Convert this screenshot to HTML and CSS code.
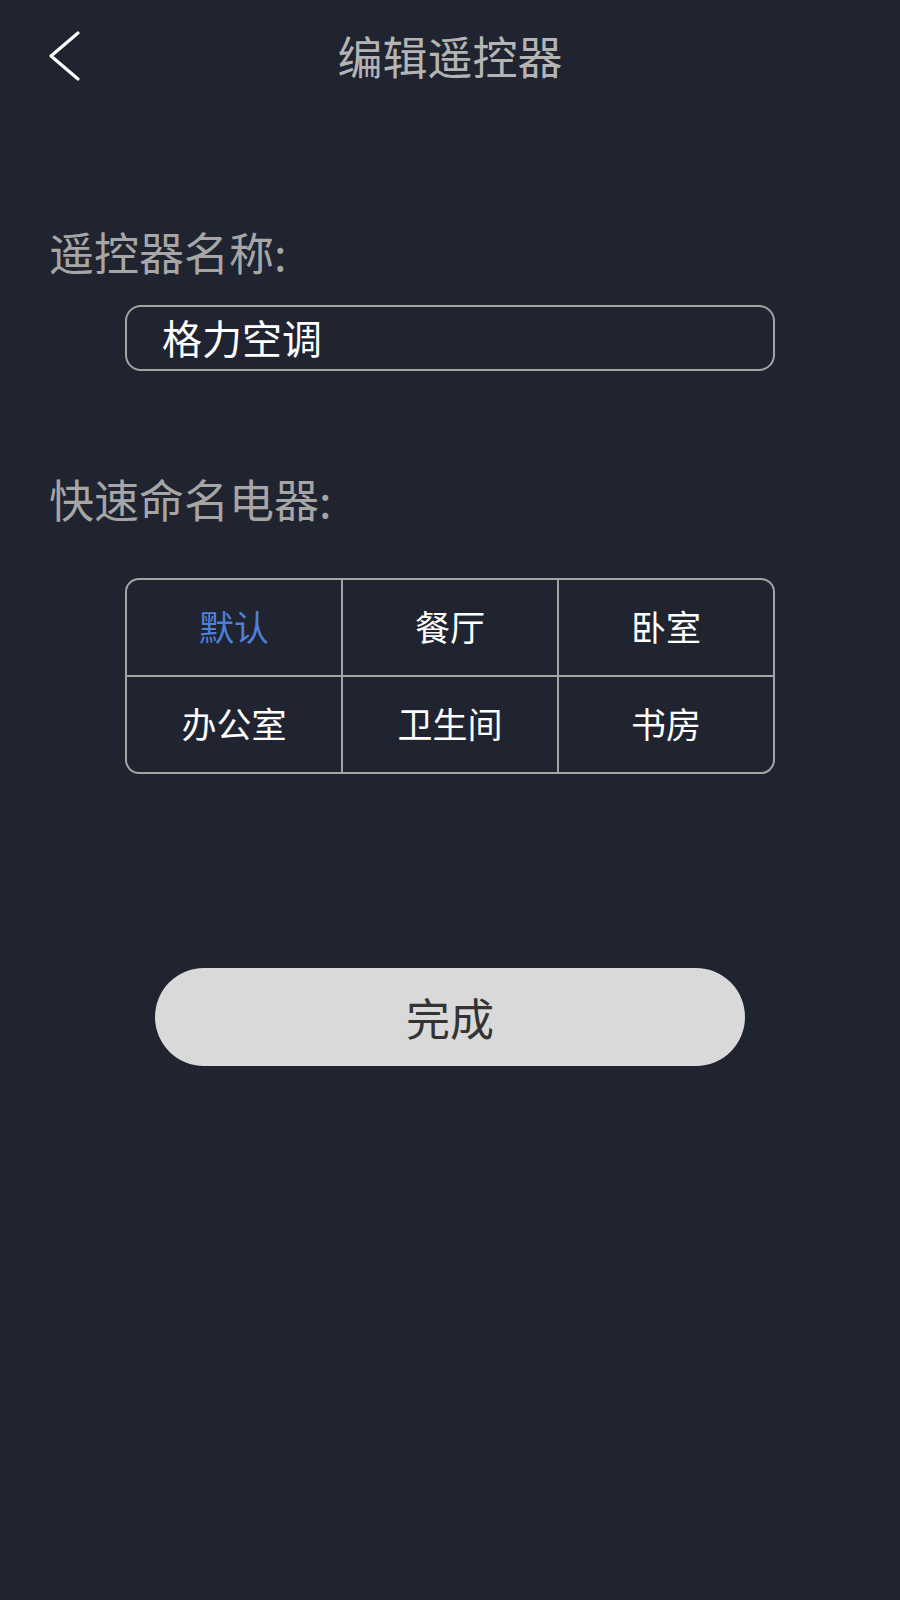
FILE: index.html
```html
<!DOCTYPE html>
<html lang="zh">
<head>
<meta charset="utf-8">
<title>编辑遥控器</title>
<link rel="stylesheet" href="styles.css">
</head>
<body>
<div class="page">
  <header class="topbar">
    <div class="back">
      <svg width="34" height="52" viewBox="0 0 34 52" aria-hidden="true">
        <polyline points="30,3 3,26 30,49" fill="none" stroke="#ffffff" stroke-width="3.2" stroke-linecap="round" stroke-linejoin="round"/>
      </svg>
    </div>
    <h1 class="title">编辑遥控器</h1>
    <div class="spacer"></div>
  </header>

  <main class="content">
    <div class="label label-name">遥控器名称:</div>
    <div class="name-box">格力空调</div>

    <div class="label label-quick">快速命名电器:</div>
    <div class="quick-grid">
      <div class="cell active">默认</div>
      <div class="cell">餐厅</div>
      <div class="cell">卧室</div>
      <div class="cell">办公室</div>
      <div class="cell">卫生间</div>
      <div class="cell">书房</div>
    </div>

    <div class="done-btn">完成</div>
  </main>
</div>
</body>
</html>
```

FILE: styles.css
```css
html, body {
  margin: 0;
  padding: 0;
  background: #1f2430;
}

body {
  font-family: "Noto Sans CJK SC", "Noto Sans", sans-serif;
  width: 900px;
  min-height: 1600px;
}

.page {
  width: 900px;
  min-height: 1600px;
  background: #1f2430;
}

.topbar {
  height: 116px;
  display: grid;
  grid-template-columns: 1fr auto 1fr;
  align-items: center;
}

.back {
  padding-left: 48px;
  display: flex;
  align-items: center;
  height: 116px;
  margin-top: -4px;
}

.back svg {
  display: block;
}

.title {
  margin: 0 0 4px 0;
  font-size: 45px;
  font-weight: 400;
  line-height: 52px;
  color: #b4b4b4;
}

.content {
  display: flex;
  flex-direction: column;
}

.label {
  font-size: 45px;
  line-height: 52px;
  color: #a6a6a6;
  margin-left: 49px;
}

.label-name {
  margin-top: 110px;
}

.name-box {
  box-sizing: border-box;
  margin-top: 27px;
  margin-left: 125px;
  width: 650px;
  height: 66px;
  border: 2px solid #a3a3a3;
  border-radius: 16px;
  padding-left: 35px;
  font-size: 40px;
  line-height: 60px;
  color: #ffffff;
}

.label-quick {
  margin-top: 102px;
}

.quick-grid {
  box-sizing: border-box;
  margin-top: 53px;
  margin-left: 125px;
  width: 650px;
  height: 196px;
  border: 2px solid #a3a3a3;
  border-radius: 14px;
  overflow: hidden;
  display: grid;
  grid-template-columns: repeat(3, 1fr);
  grid-template-rows: repeat(2, 1fr);
  gap: 2px;
  background: #a3a3a3;
}

.cell {
  background: #1f2430;
  display: flex;
  align-items: center;
  justify-content: center;
  font-size: 35px;
  line-height: 40px;
  padding-bottom: 4px;
  color: #ffffff;
}

.cell.active {
  color: #4f80d6;
}

.done-btn {
  margin-top: 194px;
  margin-left: 155px;
  width: 590px;
  height: 98px;
  border-radius: 49px;
  background: #d9d9d9;
  color: #333333;
  font-size: 44px;
  display: flex;
  align-items: center;
  justify-content: center;
}
```
